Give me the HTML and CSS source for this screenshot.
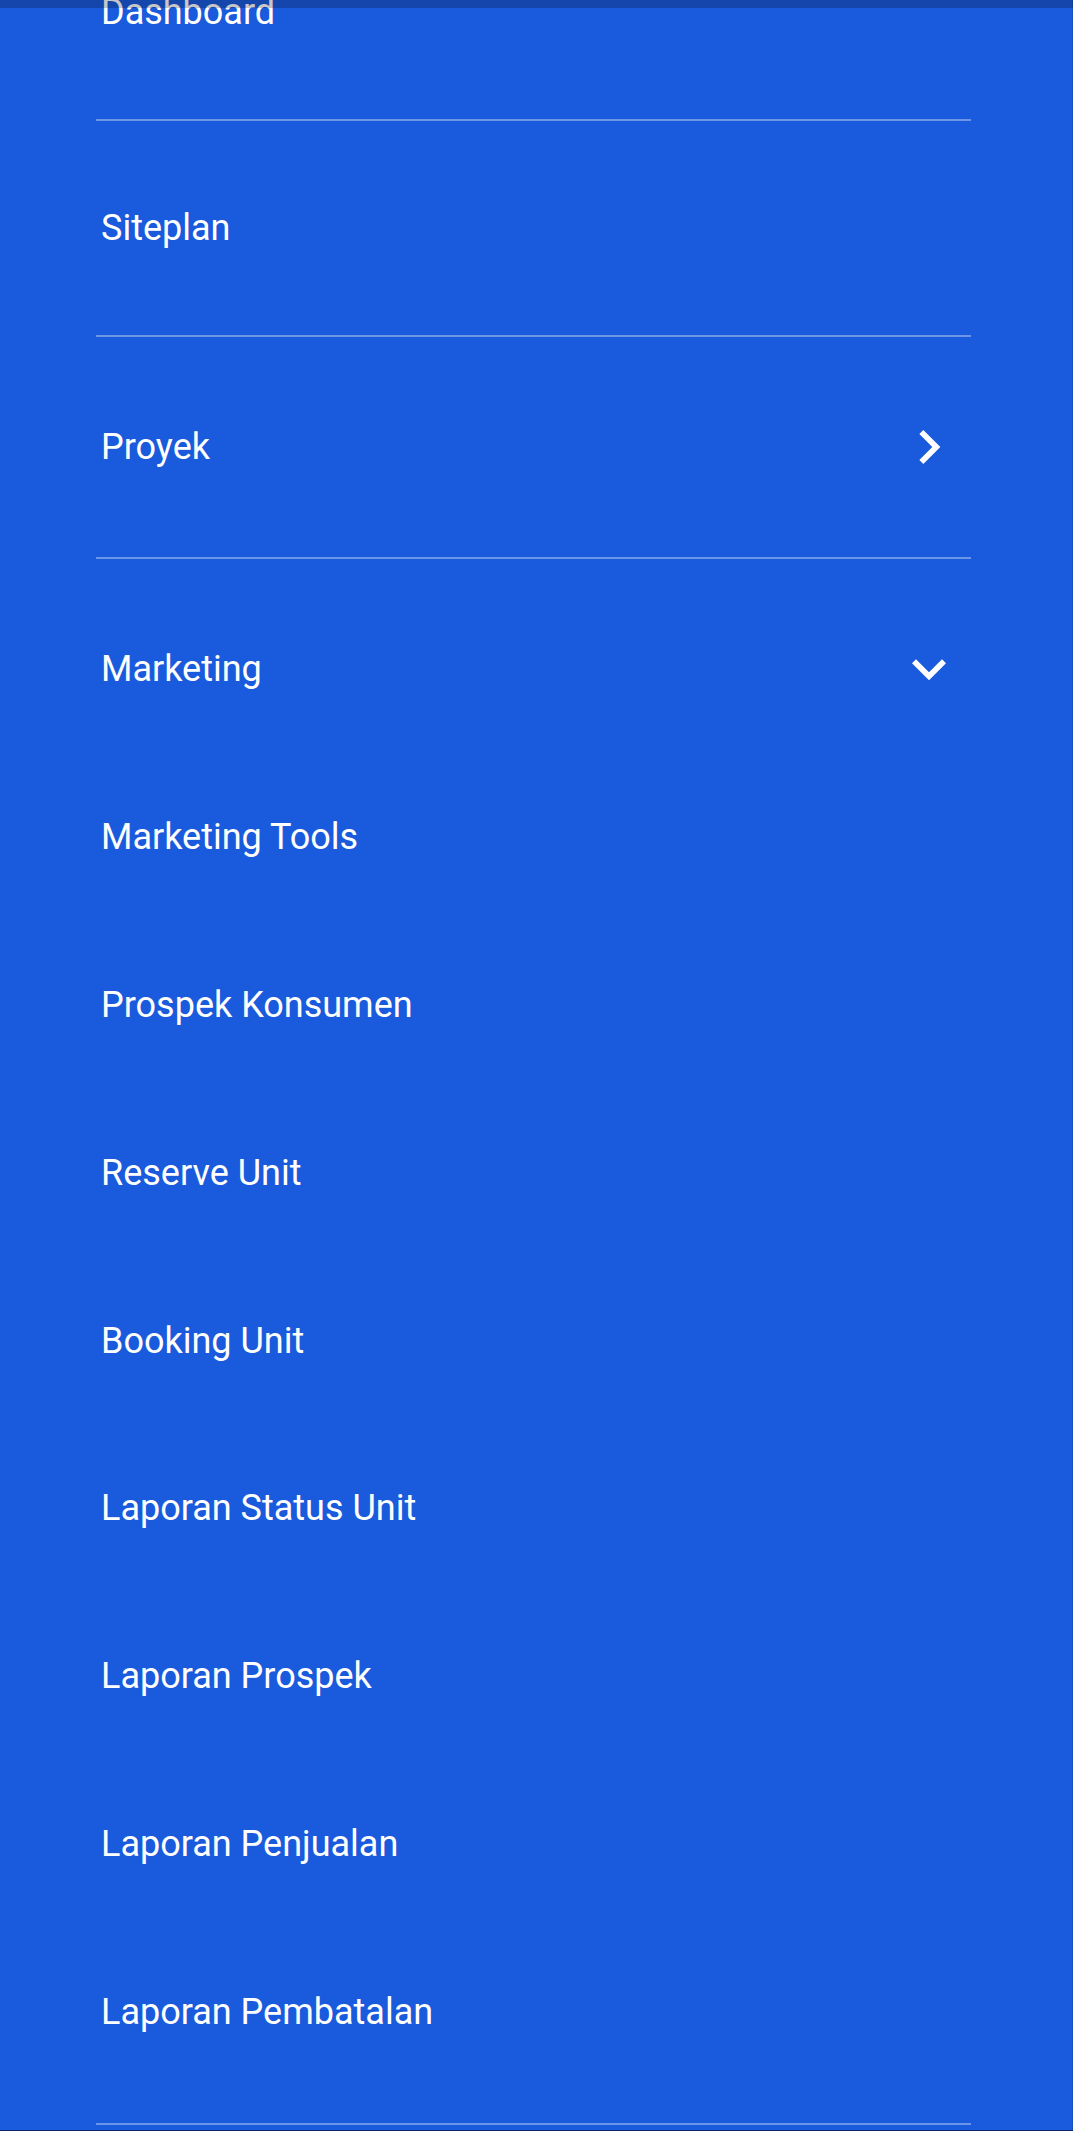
FILE: index.html
```html
<!DOCTYPE html>
<html lang="id">
<head>
<meta charset="utf-8">
<title>Menu</title>
<link rel="stylesheet" href="styles.css">
</head>
<body>
<div class="topbar"></div>
<nav class="drawer">
  <ul class="menu">
    <li class="item"><div class="row"><span class="label">Dashboard</span></div></li>
    <li class="item"><div class="row"><span class="label">Siteplan</span></div></li>
    <li class="item has-icon"><div class="row"><span class="label">Proyek</span>
      <svg class="icon" viewBox="0 0 24 24"><path d="M10 6L8.59 7.41 13.17 12l-4.58 4.59L10 18l6-6z"/></svg></div></li>
    <li class="item group">
      <div class="row head"><span class="label">Marketing</span>
        <svg class="icon" viewBox="0 0 24 24"><path d="M16.59 8.59L12 13.17 7.41 8.59 6 10l6 6 6-6z"/></svg></div>
      <ul class="sub">
        <li class="sub-item">Marketing Tools</li>
        <li class="sub-item">Prospek Konsumen</li>
        <li class="sub-item">Reserve Unit</li>
        <li class="sub-item">Booking Unit</li>
        <li class="sub-item">Laporan Status Unit</li>
        <li class="sub-item">Laporan Prospek</li>
        <li class="sub-item">Laporan Penjualan</li>
        <li class="sub-item">Laporan Pembatalan</li>
      </ul>
    </li>
  </ul>
</nav>
<div class="bottombar"></div>
</body>
</html>
```
FILE: styles.css
```css
html, body {
  margin: 0;
  padding: 0;
  background: #1a5adc;
}
body {
  height: 2131px;
  overflow: hidden;
  font-family: Roboto, "Liberation Sans", sans-serif;
  color: #ffffff;
  border-right: 1px solid rgba(0, 0, 0, 0.12);
  box-sizing: border-box;
}
.topbar {
  position: fixed;
  top: 0;
  left: 0;
  right: 0;
  height: 8px;
  background: rgba(0, 0, 0, 0.22);
  z-index: 5;
}
.bottombar {
  position: fixed;
  bottom: 0;
  left: 0;
  right: 0;
  height: 1px;
  background: rgba(0, 0, 0, 0.55);
  z-index: 5;
}
.drawer {
  margin: -95px 101px 0 96px;
}
.menu, .sub {
  list-style: none;
  margin: 0;
  padding: 0;
}
.item {
  border-bottom: 2px solid rgba(255, 255, 255, 0.36);
  padding: 76px 8px 76px 5px;
}
.row {
  display: flex;
  align-items: center;
  justify-content: space-between;
}
.has-icon .row, .head {
  height: 68px;
}
.label {
  font-size: 36px;
  line-height: 62px;
}
.icon {
  width: 68px;
  height: 68px;
  fill: #ffffff;
  flex: none;
}
.group {
  padding-bottom: 27px;
}
.head {
  padding-bottom: 50px;
}
.sub-item {
  font-size: 36px;
  line-height: 62px;
  padding: 53px 0 52.86px;
}
```
